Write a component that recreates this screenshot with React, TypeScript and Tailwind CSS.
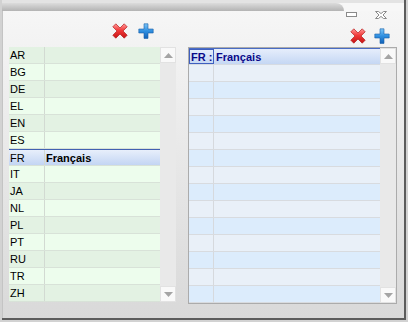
import React from "react";

const codes = ["AR","BG","DE","EL","EN","ES","FR","IT","JA","NL","PL","PT","RU","TR","ZH"];

function RedX() {
  return (
    <svg width="16" height="16" viewBox="0 0 16 16">
      <defs>
        <linearGradient id="rxg" x1="0" y1="0" x2="0" y2="1">
          <stop offset="0" stopColor="#ff9a9a" />
          <stop offset="0.45" stopColor="#f23a3a" />
          <stop offset="1" stopColor="#c41414" />
        </linearGradient>
      </defs>
      <path
        d="M0.8 3.8 L3.8 0.8 L8 5 L12.2 0.8 L15.2 3.8 L11 8 L15.2 12.2 L12.2 15.2 L8 11 L3.8 15.2 L0.8 12.2 L5 8 Z"
        fill="url(#rxg)"
        stroke="#b51c1c"
        strokeWidth="0.7"
        strokeLinejoin="round"
      />
    </svg>
  );
}

function BluePlus() {
  return (
    <svg width="16" height="16" viewBox="0 0 16 16">
      <defs>
        <linearGradient id="bpg" x1="0" y1="0" x2="0" y2="1">
          <stop offset="0" stopColor="#7cc4f6" />
          <stop offset="0.5" stopColor="#2f8fe0" />
          <stop offset="1" stopColor="#1462b8" />
        </linearGradient>
      </defs>
      <path
        d="M6 0.8 H10 V6 H15.2 V10 H10 V15.4 H6 V10 H0.8 V6 H6 Z"
        fill="url(#bpg)"
        stroke="#1a5fa8"
        strokeWidth="0.6"
        strokeLinejoin="round"
      />
    </svg>
  );
}

function Tri({ up }: { up: boolean }) {
  return (
    <svg width="9" height="5" viewBox="0 0 9 5">
      {up ? (
        <path d="M0 5 L4.5 0 L9 5 Z" fill="#a4a4a4" />
      ) : (
        <path d="M0 0 L9 0 L4.5 5 Z" fill="#a4a4a4" />
      )}
    </svg>
  );
}

function ScrollBar() {
  return (
    <div className="flex w-[16px] flex-col bg-[#e9e9e9]">
      <div className="flex h-[16px] items-center justify-center border border-[#e2e2e2] bg-[#f9f9f9]">
        <Tri up />
      </div>
      <div className="flex-1" />
      <div className="flex h-[16px] items-center justify-center border border-[#e2e2e2] bg-[#f9f9f9]">
        <Tri up={false} />
      </div>
    </div>
  );
}

export default function App() {
  return (
    <div className="h-[322px] w-[408px] bg-[#d2d2d2] pb-[2px] pl-[2px] pr-[2px] font-['Liberation_Sans',Arial,sans-serif] text-[11px] leading-[16px] text-black">
      <div className="flex h-[320px] w-[404px] flex-col border-b-2 border-r-2 border-[#5c5c5c] bg-gradient-to-b from-[#f7f7f7] to-[#d9d9d9]">
        <div className="h-[3px] bg-[#e3e3e3]" />
        <div className="flex h-[8px]">
          <div className="flex-1 rounded-tr-[9px] bg-gradient-to-b from-[#dcdcdc] to-[#b3b3b3]" />
          <div className="w-[60px] bg-[#f7f7f7]" />
        </div>
        <div className="flex flex-1 border-l border-[#c4c4c4]">
          {/* left pane */}
          <div className="ml-[6px] flex w-[167px] flex-col">
            <div className="flex h-[36px] items-start justify-end gap-[10px] pr-[22px] pt-[12px]">
              <RedX />
              <BluePlus />
            </div>
            <div className="flex h-[255px]">
              <div className="flex w-[151px] flex-col">
                {codes.map((c, i) => {
                  const sel = c === "FR";
                  const bg = sel
                    ? "border-t border-t-[#4262b2] bg-gradient-to-b from-[#e8effb] to-[#c3d5f3]"
                    : i % 2 === 0
                    ? "bg-[#e3f2e3]"
                    : "bg-[#edfded]";
                  return (
                    <div key={c} className={`flex h-[17px] border-b border-[#d8e2d8] ${bg}`}>
                      <div className="w-[36px] border-r border-[#d2dad2] pl-px">{c}</div>
                      <div className="flex-1 pl-px font-bold">{sel ? "Français" : ""}</div>
                    </div>
                  );
                })}
              </div>
              <ScrollBar />
            </div>
          </div>
          {/* right pane */}
          <div className="ml-[12px] flex w-[209px] flex-col">
            <div className="flex h-[36px] flex-col">
              <div className="flex h-[8px] items-start justify-end gap-[18px] pr-[10px]">
                <div className="mt-px h-[5px] w-[11px] border border-[#8a8a8a] bg-white" />
                <svg width="12" height="8" viewBox="0 0 12 8">
                  <path
                    d="M0.5 0.5 H3.5 L6 2.6 L8.5 0.5 H11.5 L8 4 L11.5 7.5 H8.5 L6 5.4 L3.5 7.5 H0.5 L4 4 Z"
                    fill="#ffffff"
                    stroke="#8a8a8a"
                    strokeWidth="1"
                    strokeLinejoin="round"
                  />
                </svg>
              </div>
              <div className="mt-[9px] flex h-[16px] items-start justify-end gap-[8px] pr-[7px]">
                <RedX />
                <BluePlus />
              </div>
            </div>
            <div className="flex h-[257px] border border-[#ababab]">
              <div className="flex w-[191px] flex-col">
                {codes.map((c, i) => {
                  if (i === 0) {
                    return (
                      <div
                        key={c}
                        className="flex h-[17px] border-b border-t border-b-[#d6dbe2] border-t-[#4a6cc4] bg-gradient-to-b from-[#e6eefb] to-[#c5d7f4] font-bold text-[#0a0a8a]"
                      >
                        <div className="w-[25px] border border-[#3f5fbf] pl-[1px] leading-[14px]">FR :</div>
                        <div className="flex-1 pl-[2px]">Français</div>
                      </div>
                    );
                  }
                  const bg = i % 2 === 0 ? "bg-[#dcecfc]" : "bg-[#e9f0f8]";
                  return (
                    <div key={c} className={`flex h-[17px] border-b border-[#d8dbdf] ${bg}`}>
                      <div className="w-[25px] border-r border-[#d6d9dd]" />
                      <div className="flex-1" />
                    </div>
                  );
                })}
              </div>
              <ScrollBar />
            </div>
          </div>
        </div>
      </div>
    </div>
  );
}
